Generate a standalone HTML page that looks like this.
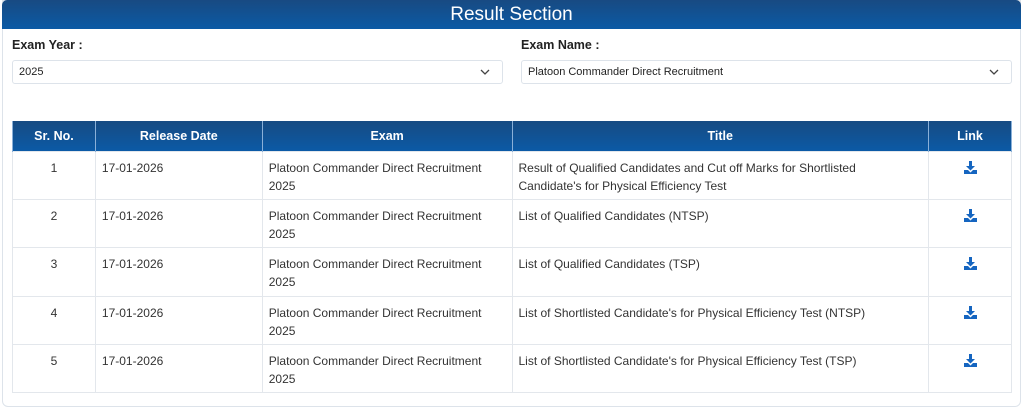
<!DOCTYPE html>
<html><head><style>
*{margin:0;padding:0;box-sizing:border-box}
body{width:1024px;height:412px;background:#fff;font-family:"Liberation Sans",sans-serif;color:#333;position:relative;overflow:hidden}
.card{position:absolute;left:2px;top:0;width:1019px;height:407px;border:1px solid #dde3ea;border-radius:0 0 6px 6px}
.hd{position:absolute;left:2px;top:0;width:1019px;height:29px;background:linear-gradient(#184a82,#0b5aa5);color:#fff;font-size:19px;text-align:center;line-height:29px;border-radius:5px 5px 0 0}
.lbl{position:absolute;top:38px;font-size:12.5px;font-weight:bold;color:#222}
.sel{position:absolute;top:60px;height:24px;border:1px solid #dde3ea;border-radius:3px;font-size:11px;line-height:22px;padding-left:6px;color:#222}
.sel svg{position:absolute;right:12px;top:8px}
table{position:absolute;left:12px;top:121px;width:1000px;border-collapse:collapse;font-size:12px}
th{background:linear-gradient(#174b82,#0b5aa6);color:#fff;height:30px;font-weight:bold;font-size:12.5px;border-left:1px solid #8ab0d8;border-right:1px solid #8ab0d8}
td{border:1px solid #e3e7ec;height:48.4px;vertical-align:top;padding:7px 6px 0;line-height:18px;color:#333}
td.c{text-align:center}
td.c svg{margin-top:2px}
</style></head><body>
<div class="card"></div>
<div class="hd">Result Section</div>
<div class="lbl" style="left:12px">Exam Year :</div>
<div class="lbl" style="left:521px">Exam Name :</div>
<div class="sel" style="left:12px;width:491px">2025<svg width="10" height="6" viewBox="0 0 10 6"><path d="M1 1l4 4 4-4" stroke="#444" stroke-width="1.3" fill="none"/></svg></div>
<div class="sel" style="left:521px;width:491px">Platoon Commander Direct Recruitment<svg width="10" height="6" viewBox="0 0 10 6"><path d="M1 1l4 4 4-4" stroke="#444" stroke-width="1.3" fill="none"/></svg></div>
<table>
<tr><th style="width:83px">Sr. No.</th><th style="width:167px">Release Date</th><th style="width:250px">Exam</th><th style="width:417px">Title</th><th style="width:83px">Link</th></tr>
<tr><td class="c">1</td><td>17-01-2026</td><td>Platoon Commander Direct Recruitment 2025</td><td>Result of Qualified Candidates and Cut off Marks for Shortlisted Candidate's for Physical Efficiency Test</td><td class="c"><svg width="13" height="13" viewBox="0 0 13 13"><path d="M5 0h3v5h3l-4.5 4.5L2 5h3z M0 9h4l2.5 2.5L9 9h4v4H0z" fill="#1565c0"/></svg></td></tr>
<tr><td class="c">2</td><td>17-01-2026</td><td>Platoon Commander Direct Recruitment 2025</td><td>List of Qualified Candidates (NTSP)</td><td class="c"><svg width="13" height="13" viewBox="0 0 13 13"><path d="M5 0h3v5h3l-4.5 4.5L2 5h3z M0 9h4l2.5 2.5L9 9h4v4H0z" fill="#1565c0"/></svg></td></tr>
<tr><td class="c">3</td><td>17-01-2026</td><td>Platoon Commander Direct Recruitment 2025</td><td>List of Qualified Candidates (TSP)</td><td class="c"><svg width="13" height="13" viewBox="0 0 13 13"><path d="M5 0h3v5h3l-4.5 4.5L2 5h3z M0 9h4l2.5 2.5L9 9h4v4H0z" fill="#1565c0"/></svg></td></tr>
<tr><td class="c">4</td><td>17-01-2026</td><td>Platoon Commander Direct Recruitment 2025</td><td>List of Shortlisted Candidate's for Physical Efficiency Test (NTSP)</td><td class="c"><svg width="13" height="13" viewBox="0 0 13 13"><path d="M5 0h3v5h3l-4.5 4.5L2 5h3z M0 9h4l2.5 2.5L9 9h4v4H0z" fill="#1565c0"/></svg></td></tr>
<tr><td class="c">5</td><td>17-01-2026</td><td>Platoon Commander Direct Recruitment 2025</td><td>List of Shortlisted Candidate's for Physical Efficiency Test (TSP)</td><td class="c"><svg width="13" height="13" viewBox="0 0 13 13"><path d="M5 0h3v5h3l-4.5 4.5L2 5h3z M0 9h4l2.5 2.5L9 9h4v4H0z" fill="#1565c0"/></svg></td></tr>
</table>
</body></html>
